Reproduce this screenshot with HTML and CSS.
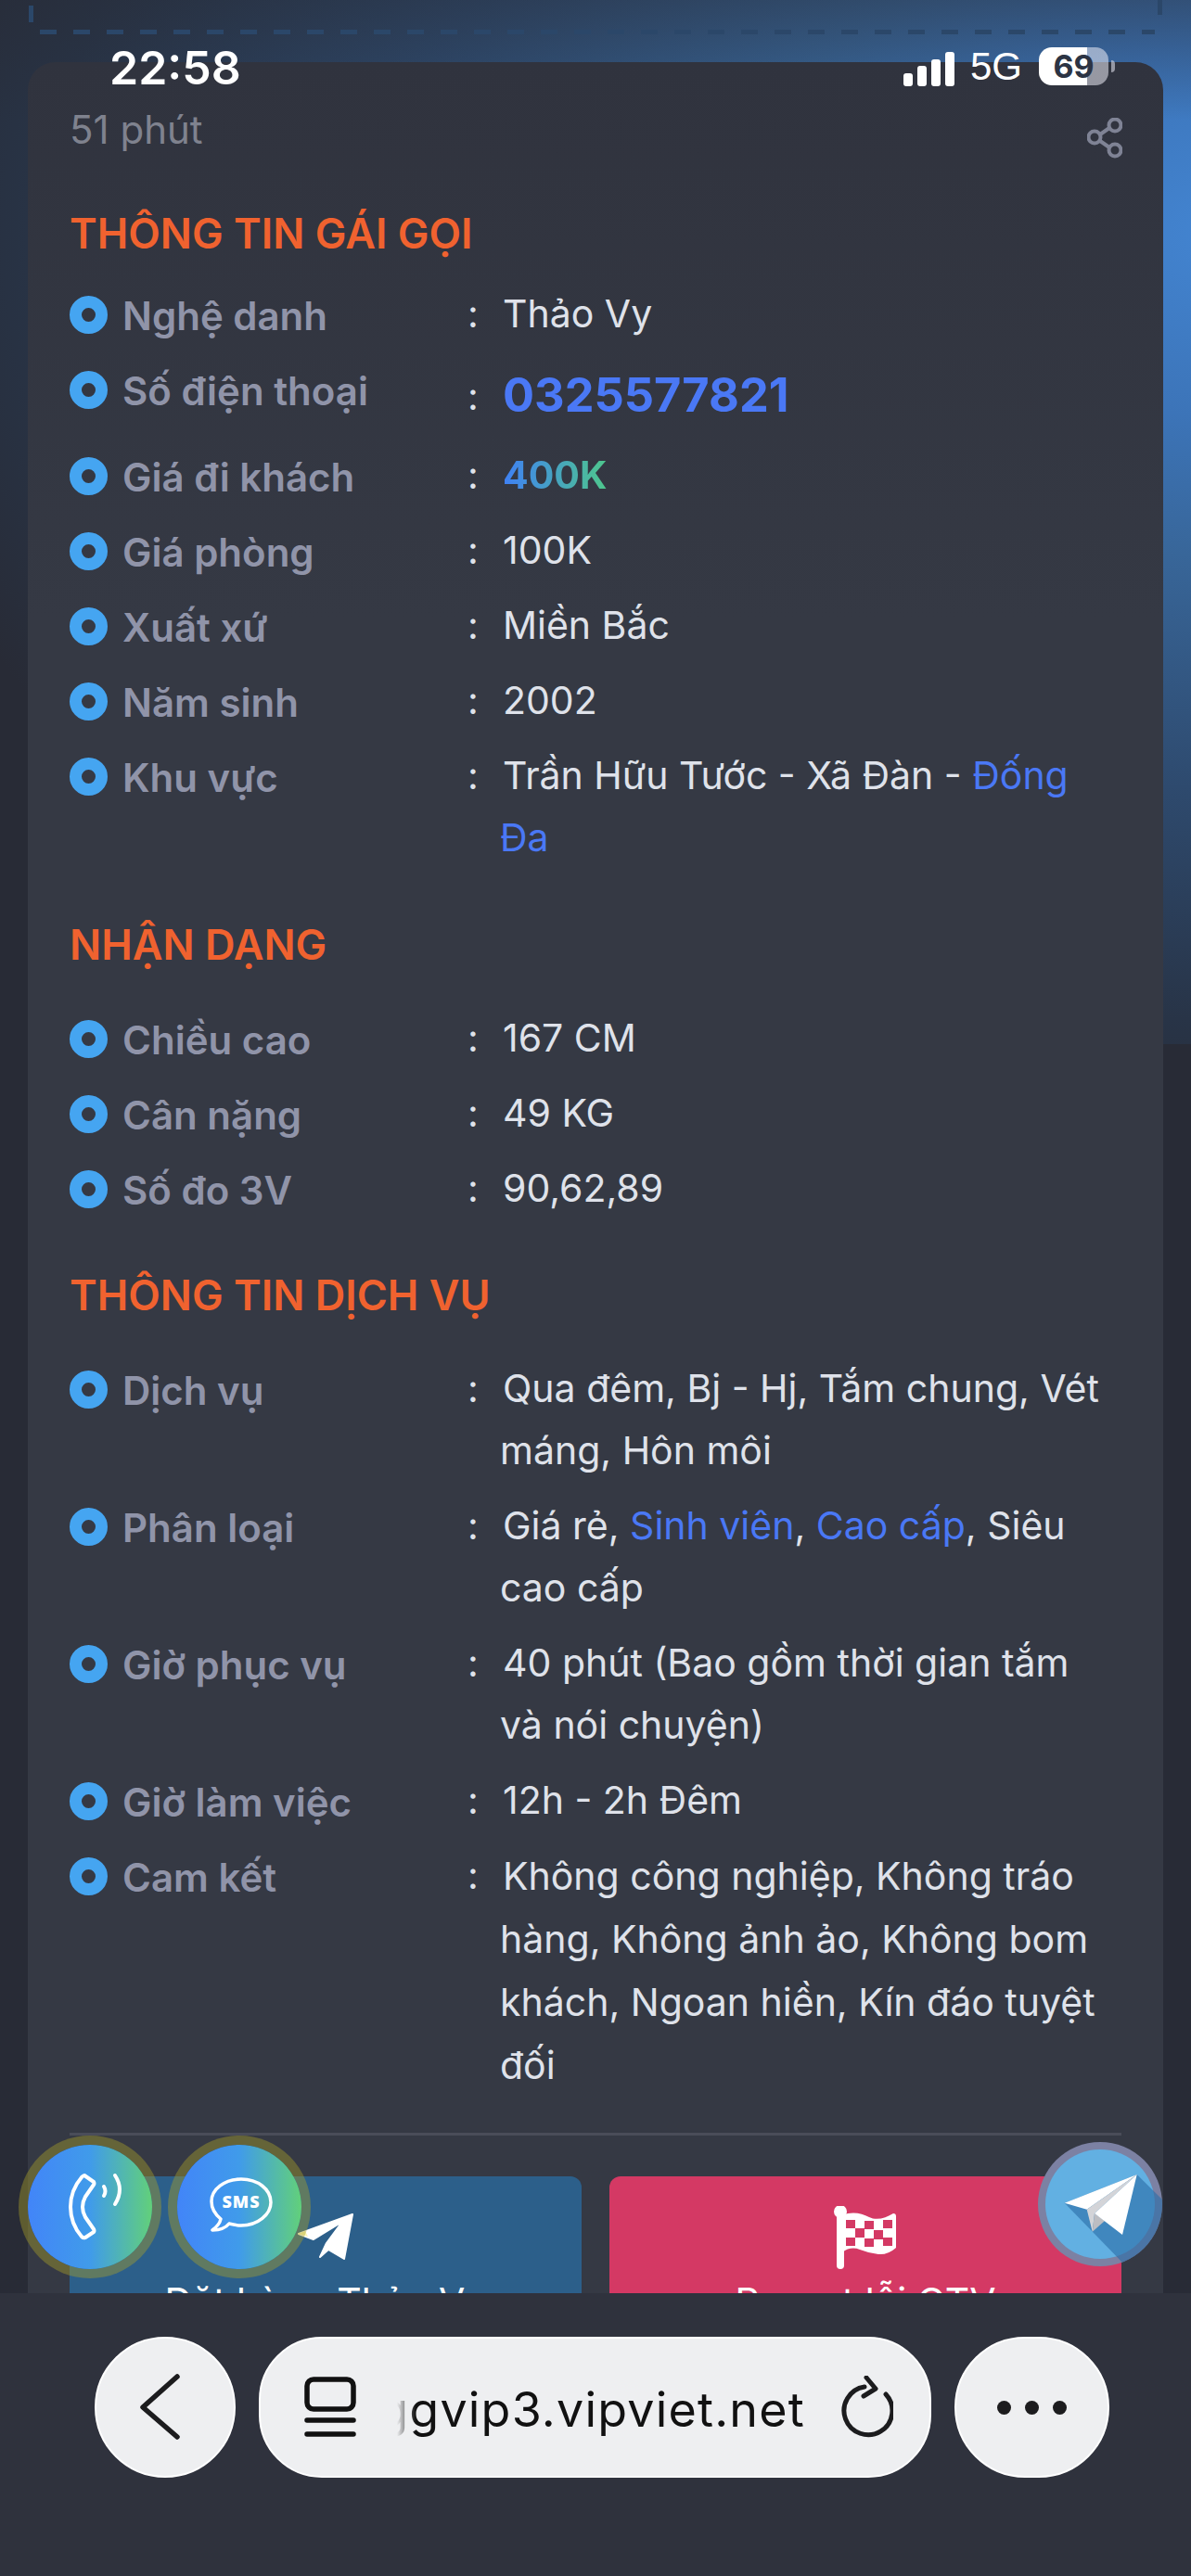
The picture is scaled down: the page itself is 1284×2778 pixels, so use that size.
FILE: index.html
```html
<!DOCTYPE html>
<html lang="vi">
<head>
    <meta charset="UTF-8">
    <meta name="viewport" content="width=device-width, initial-scale=1.0">
    <title>Thông tin gái gọi</title>
    <link rel="stylesheet" href="styles.css">
</head>
<body>
    <!-- Status bar -->
    <div class="status-bar">
        <span class="time">22:58</span>
        <div class="status-right">
            <div class="signal"><i class="s1"></i><i class="s2"></i><i class="s3"></i><i class="s4"></i></div>
            <span class="net">5G</span>
            <div class="battery"><span>69</span></div>
            <div class="battery-nub"></div>
        </div>
    </div>

    <div class="top-deco"><div class="dash-line"></div></div>

    <main class="card">
        <div class="card-head">
            <span class="ago">51 phút</span>
            <svg class="share" viewBox="0 0 38 44" fill="none" stroke="#7f8395" stroke-width="4">
                <circle cx="30" cy="8" r="6.5"/>
                <circle cx="8" cy="21" r="6.5"/>
                <circle cx="30" cy="35" r="6.5"/>
                <path d="M14 18 24 11M14 25 24 32"/>
            </svg>
        </div>

        <h2 class="section-title first">THÔNG TIN GÁI GỌI</h2>
        <div class="row"><span class="dot"></span><span class="label">Nghệ danh</span><span class="colon">:</span><div class="value">Thảo Vy</div></div>
        <div class="row row-phone"><span class="dot"></span><span class="label">Số điện thoại</span><span class="colon">:</span><div class="value phone">0325577821</div></div>
        <div class="row"><span class="dot"></span><span class="label">Giá đi khách</span><span class="colon">:</span><div class="value"><span class="price">400K</span></div></div>
        <div class="row"><span class="dot"></span><span class="label">Giá phòng</span><span class="colon">:</span><div class="value">100K</div></div>
        <div class="row"><span class="dot"></span><span class="label">Xuất xứ</span><span class="colon">:</span><div class="value">Miền Bắc</div></div>
        <div class="row"><span class="dot"></span><span class="label">Năm sinh</span><span class="colon">:</span><div class="value">2002</div></div>
        <div class="row"><span class="dot"></span><span class="label">Khu vực</span><span class="colon">:</span><div class="value">Trần Hữu Tước - Xã Đàn - <a>Đống Đa</a></div></div>

        <h2 class="section-title">NHẬN DẠNG</h2>
        <div class="row"><span class="dot"></span><span class="label">Chiều cao</span><span class="colon">:</span><div class="value">167 CM</div></div>
        <div class="row"><span class="dot"></span><span class="label">Cân nặng</span><span class="colon">:</span><div class="value">49 KG</div></div>
        <div class="row"><span class="dot"></span><span class="label">Số đo 3V</span><span class="colon">:</span><div class="value">90,62,89</div></div>

        <h2 class="section-title">THÔNG TIN DỊCH VỤ</h2>
        <div class="row"><span class="dot"></span><span class="label">Dịch vụ</span><span class="colon">:</span><div class="value">Qua đêm, Bj - Hj, Tắm chung, Vét máng, Hôn môi</div></div>
        <div class="row"><span class="dot"></span><span class="label">Phân loại</span><span class="colon">:</span><div class="value">Giá rẻ, <a>Sinh viên</a>, <a>Cao cấp</a>, Siêu cao cấp</div></div>
        <div class="row"><span class="dot"></span><span class="label">Giờ phục vụ</span><span class="colon">:</span><div class="value">40 phút (Bao gồm thời gian tắm và nói chuyện)</div></div>
        <div class="row"><span class="dot"></span><span class="label">Giờ làm việc</span><span class="colon">:</span><div class="value">12h - 2h Đêm</div></div>
        <div class="row"><span class="dot"></span><span class="label">Cam kết</span><span class="colon">:</span><div class="value value-long">Không công nghiệp, Không tráo hàng, Không ảnh ảo, Không bom khách, Ngoan hiền, Kín đáo tuyệt đối</div></div>

        <hr class="divider">

        <div class="actions">
            <div class="action action-blue">
                <svg class="action-icon plane" viewBox="0 0 60 50">
                    <path d="M59 1 1 22 17 28 48 9 31 32 24 47 33 39 50 49Z" fill="#fff" stroke="#fff" stroke-width="2" stroke-linejoin="round"/>
                    <path d="M0 22 8 19 11 25Z" fill="#fdf8b4"/>
                </svg>
                <span>Đặt hàng Thảo Vy</span>
            </div>
            <div class="action action-red">
                <svg class="action-icon flag" viewBox="0 0 68 68">
                    <circle cx="7" cy="6" r="7" fill="#fff"/>
                    <rect x="3" y="6" width="8" height="62" rx="4" fill="#fff"/>
                    <path d="M9 10C20 5 30 8 38 12S56 13 64 8Q67 8 67 11V45Q58 53 48 52T28 47 9 50Z" fill="#fff"/>
                    <g fill="#d43964">
                        <rect x="13" y="15" width="10" height="9"/><rect x="33" y="16" width="10" height="9"/><rect x="53" y="15" width="10" height="9"/>
                        <rect x="23" y="24" width="10" height="10"/><rect x="43" y="26" width="10" height="10"/>
                        <rect x="13" y="34" width="10" height="9"/><rect x="33" y="35" width="10" height="9"/><rect x="53" y="34" width="10" height="9"/>
                    </g>
                </svg>
                <span>Report lỗi CTV</span>
            </div>
        </div>
    </main>

    <!-- Floating buttons -->
    <div class="float float-phone">
        <svg viewBox="0 0 154 154" fill="none" stroke="#fff" stroke-width="4" stroke-linecap="round" stroke-linejoin="round">
            <path d="M71 43l10 7q1 2 0 3l-9 13q-6 11 0 22l9 13q1 2 0 3l-9 6q-2 1-4-1q-12-14-12-32t12-32q2-2 3-2z"/>
            <path d="M92 55q3 5 0 10M104 43q10 15 0 31"/>
        </svg>
    </div>
    <div class="float float-sms">
        <svg viewBox="0 0 154 154" fill="none" stroke="#fff" stroke-width="3.500" stroke-linejoin="round">
            <path d="M79 47C61 47 47 58 47 71 47 79 51 85 57 90 56 95 52 99 48 102 55 102 62 100 66 95 70 96 74 97 79 97 97 97 111 85 111 72 111 58 97 47 79 47Z"/>
            <text x="79" y="78" class="sms-text">SMS</text>
        </svg>
    </div>
    <div class="float-telegram">
        <svg viewBox="0 0 134 134">
            <defs><clipPath id="outer"><circle cx="67" cy="67" r="67"/></clipPath></defs>
            <circle cx="67" cy="67" r="67" fill="#7c81a3"/>
            <circle cx="67" cy="67" r="59" fill="#62b0e2"/>
            <g clip-path="url(#outer)">
                <path d="M106.700 35 140 68 140 134 95 134 28.700 65.700Z" fill="#2c6ea8" opacity=".62"/>
            </g>
            <path d="M106.700 35 28.700 65.700 52.700 72.700Z" fill="#fff"/>
            <path d="M106.700 35 52.700 72.700 58.700 96.700 61 77Z" fill="#d3d4d8"/>
            <path d="M61 77 58.700 96.700 72 85Z" fill="#bcbdc2"/>
            <path d="M106.700 35 61 77 91 100Z" fill="#fff"/>
        </svg>
    </div>

    <!-- Browser toolbar -->
    <nav class="toolbar">
        <div class="tool-btn tool-back">
            <svg viewBox="0 0 148 148" fill="none" stroke="#1c1c1e" stroke-width="5.500" stroke-linecap="round" stroke-linejoin="round"><path d="M87 41 50 74 87 106"/></svg>
        </div>
        <div class="url-pill">
            <svg class="url-list" viewBox="0 0 56 66" fill="none" stroke="#111" stroke-width="5.500" stroke-linecap="round">
                <rect x="3" y="3" width="50" height="32" rx="7"/>
                <path d="M3 47H53M3 62H53"/>
            </svg>
            <div class="url-text"><span>ggvip3.vipviet.net</span></div>
            <svg class="url-reload" viewBox="0 0 58 68" fill="none" stroke="#1c1c1e" stroke-width="5" stroke-linecap="round" stroke-linejoin="round">
                <path d="M27 12A26 26 0 1 0 50 20"/>
                <path d="M29 2 39 14 26 22"/>
            </svg>
        </div>
        <div class="tool-btn tool-more"><i></i><i></i><i></i></div>
    </nav>
</body>
</html>
```

FILE: styles.css
```css
* {
    box-sizing: border-box;
}
body {
    margin: 0;
    height: 2778px;
    overflow: hidden;
    position: relative;
    font-family: Inter, "Noto Sans", sans-serif;
    background-color: #282b36;
    background-image:
        linear-gradient(rgba(40, 43, 54, .45), rgba(40, 43, 54, 0) 130px),
        radial-gradient(ellipse 1500px 1000px at 1330px 250px, #4385d2 0%, #3c74b8 20%, #386699 35%, #2e4a6e 60%, #283447 85%, #282b36 100%);
    background-size: 100% 1126px;
    background-repeat: no-repeat;
}

/* Status bar */
.status-bar {
    position: absolute;
    top: 0;
    left: 0;
    right: 0;
    z-index: 5;
    height: 100px;
    display: flex;
    justify-content: space-between;
    padding: 46px 82px 0 118px;
    color: #fff;
}
.time {
    font-size: 50px;
    font-weight: 600;
    line-height: 54px;
}
.status-right {
    display: flex;
    align-items: flex-end;
    height: 47px;
}
.signal {
    display: flex;
    align-items: flex-end;
    gap: 5px;
    height: 45px;
}
.signal i {
    display: block;
    width: 10px;
    background: #fff;
    border-radius: 3px;
}
.signal .s1 { height: 14px; }
.signal .s2 { height: 22px; }
.signal .s3 { height: 29px; }
.signal .s4 { height: 37px; }
.net {
    font-family: "Liberation Sans", sans-serif;
    font-size: 42px;
    line-height: 46px;
    margin-left: 17px;
    margin-bottom: -2px;
}
.battery {
    width: 75px;
    height: 41px;
    margin-left: 18px;
    margin-bottom: 1px;
    border-radius: 14px;
    background: linear-gradient(to right, #fff 69%, rgba(235, 235, 245, .55) 69%);
    display: flex;
    align-items: center;
    justify-content: center;
}
.battery span {
    color: #2c3444;
    font-size: 34px;
    font-weight: 700;
}
.battery-nub {
    width: 4px;
    height: 13px;
    margin: 0 0 15px 3px;
    background: rgba(235, 235, 245, .55);
    border-radius: 0 4px 4px 0;
}

/* Faded decor above the card */
.top-deco {
    position: relative;
    height: 67px;
    padding: 32px 39px 0 43px;
}
.top-deco::before, .top-deco::after {
    content: "";
    position: absolute;
    width: 5px;
    background: #2b4769;
}
.top-deco::before {
    left: 31px;
    top: 6px;
    height: 18px;
}
.top-deco::after {
    left: 1248px;
    top: 0;
    height: 16px;
}
.dash-line {
    height: 5px;
    background: repeating-linear-gradient(to right, #2b4769 0 18px, transparent 18px 36px);
}

/* Card */
.card {
    margin: 0 30px;
    padding: 40px 45px 0;
    height: 2500px;
    border-radius: 30px 30px 0 0;
    background: linear-gradient(#30333e, #353944 600px);
}
.card-head {
    display: flex;
    justify-content: space-between;
    height: 60px;
}
.ago {
    font-size: 42px;
    line-height: 60px;
    color: #7f828e;
    margin-top: 3px;
}
.share {
    width: 38px;
    height: 44px;
    margin-top: 20px;
    margin-right: -1px;
}
.section-title {
    margin: 57px 0 42px;
    font-size: 45px;
    line-height: 50px;
    font-weight: 600;
    color: #f0622f;
}
.section-title.first {
    margin: 60px 0 28px;
}

/* Info rows */
.row {
    display: flex;
    margin-bottom: 14px;
}
.dot {
    flex: none;
    width: 41px;
    height: 41px;
    margin-top: 14px;
    border: 13.500px solid #45a5f1;
    border-radius: 50%;
}
.label {
    flex: none;
    width: 385px;
    padding-left: 16px;
    margin-top: 5px;
    font-size: 42px;
    line-height: 62px;
    font-weight: 600;
    color: #9094a9;
}
.colon {
    flex: none;
    width: 38px;
    padding-left: 3px;
    font-size: 41px;
    line-height: 67px;
    color: #dfe2ea;
}
.value {
    flex: 1;
    text-indent: 3px;
    font-size: 41px;
    line-height: 67px;
    color: #dfe2ea;
}
.value-long {
    line-height: 68px;
}
.value a {
    color: #4a78f5;
}
.value.phone {
    font-size: 50.500px;
    line-height: 79px;
    font-weight: 700;
    color: #4a78f5;
}
.row-phone .colon {
    margin-top: 8px;
}
.price {
    font-weight: 700;
    background: linear-gradient(to right, #3f80f5, #4ec78c);
    -webkit-background-clip: text;
    background-clip: text;
    color: transparent;
}
.divider {
    height: 3px;
    border: 0;
    margin: 39px 0 44px;
    background: #4a4d59;
}

/* Action buttons */
.actions {
    display: grid;
    grid-template-columns: 552px 552px;
    gap: 30px;
}
.action {
    height: 250px;
    border-radius: 12px 12px 0 0;
    color: #fff;
    font-size: 41px;
    display: flex;
    flex-direction: column;
    align-items: center;
}
.action-blue {
    background: #2c5f8a;
}
.action-red {
    background: #d43964;
}
.action-icon {
    display: block;
}
.action-icon.plane {
    width: 60px;
    height: 50px;
    margin-top: 40px;
    margin-bottom: 20px;
}
.action-icon.flag {
    width: 68px;
    height: 68px;
    margin-top: 32px;
    margin-bottom: 10px;
}

/* Floating buttons */
.float {
    position: absolute;
    z-index: 2;
    top: 2313px;
    width: 134px;
    height: 134px;
    border-radius: 50%;
    background: linear-gradient(to right, #4285f8, #409bea 50%, #62d07a);
    box-shadow: 0 0 0 10px rgba(170, 160, 40, .42);
}
.float svg {
    display: block;
    width: 154px;
    height: 154px;
    margin: -10px;
}
.float-phone {
    left: 30px;
}
.float-sms {
    left: 191px;
}
.sms-text {
    fill: #fff;
    stroke: none;
    font-family: "Open Sans", sans-serif;
    font-size: 18px;
    font-weight: 800;
    letter-spacing: 1px;
    text-anchor: middle;
}
.float-telegram {
    position: absolute;
    z-index: 2;
    left: 1119px;
    top: 2310px;
    width: 134px;
    height: 134px;
}
.float-telegram svg {
    display: block;
    width: 134px;
    height: 134px;
}

/* Browser toolbar */
.toolbar {
    position: absolute;
    z-index: 3;
    left: 0;
    right: 0;
    top: 2473px;
    bottom: 0;
    background: #2f323d;
    display: flex;
    padding: 47px 88px 0 102px;
    gap: 25px;
    align-items: flex-start;
}
.tool-btn, .url-pill {
    height: 152px;
    background: #eeeff1;
    border: 2px solid #fff;
}
.tool-btn {
    flex: none;
    border-radius: 50%;
}
.tool-back {
    width: 152px;
}
.tool-back svg {
    display: block;
    width: 148px;
    height: 148px;
}
.tool-more {
    width: 167px;
    border-radius: 76px;
    display: flex;
    align-items: center;
    justify-content: center;
    gap: 15px;
}
.tool-more i {
    width: 15px;
    height: 15px;
    border-radius: 50%;
    background: #1c1c1e;
}
.url-pill {
    flex: 1;
    border-radius: 68px;
    display: flex;
    align-items: center;
    padding: 0 39px 0 47px;
}
.url-list {
    flex: none;
    width: 56px;
    height: 66px;
}
.url-text {
    width: 440px;
    margin-left: 44px;
    margin-top: 5px;
    overflow: hidden;
    white-space: nowrap;
    display: flex;
    justify-content: flex-end;
    font-size: 52px;
    letter-spacing: 1.200px;
    color: #111;
    -webkit-mask-image: linear-gradient(to right, transparent, #000 20px);
    mask-image: linear-gradient(to right, transparent, #000 20px);
}
.url-reload {
    flex: none;
    width: 58px;
    height: 68px;
    margin-left: auto;
}
```
